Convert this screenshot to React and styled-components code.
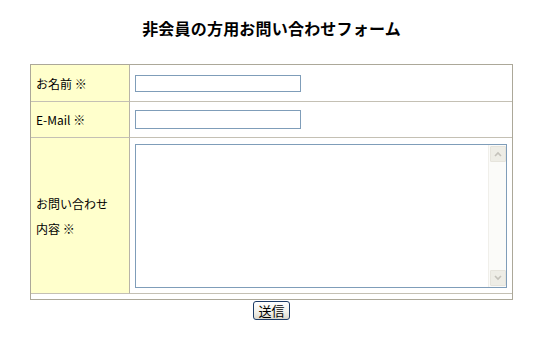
import React from 'react';
import styled, { createGlobalStyle } from 'styled-components';

const GlobalStyle = createGlobalStyle`
    html, body {
        margin: 0;
        padding: 0;
        background: #ffffff;
    }
    body {
        font-family: "Noto Sans CJK JP", "DejaVu Sans", sans-serif;
        color: #000000;
    }
`;

const Page = styled.div`
    width: 543px;
    display: flex;
    flex-direction: column;
    align-items: center;
`;

const Title = styled.h2`
    margin: 17px 0 24px;
    font-size: 16px;
    line-height: 23px;
    font-weight: bold;
    letter-spacing: 0.2px;
`;

const FormTable = styled.table`
    width: 483px;
    border: 1px solid #aca899;
    border-spacing: 0;
    padding-bottom: 5px;
    box-sizing: border-box;
`;

const Row = styled.tr``;

const LabelCell = styled.th`
    width: 99px;
    height: ${p => p.$h}px;
    box-sizing: border-box;
    padding: 0 0 0 5px;
    background: #ffffcc;
    border-right: 1px solid #b8b4a8;
    border-bottom: 1px solid #c4c0b4;
    text-align: left;
    font-weight: normal;
    font-size: 12px;
    line-height: 25px;
`;

const FieldCell = styled.td`
    height: ${p => p.$h}px;
    box-sizing: border-box;
    padding: 0 5px 0 5px;
    border-bottom: 1px solid #c4c0b4;
    vertical-align: middle;
`;

const TextInput = styled.input`
    display: block;
    width: 166px;
    height: ${p => p.$h}px;
    box-sizing: border-box;
    border: 1px solid #7f9db9;
    padding: 0 2px;
    font-size: 12px;
    font-family: inherit;
    outline: none;
`;

const AreaBox = styled.div`
    display: flex;
    width: 372px;
    height: 144px;
    box-sizing: border-box;
    border: 1px solid #7f9db9;
    background: #ffffff;
`;

const Area = styled.textarea`
    flex: 1;
    border: none;
    resize: none;
    outline: none;
    padding: 2px;
    font-size: 12px;
    font-family: inherit;
`;

const ScrollBar = styled.div`
    width: 17px;
    display: flex;
    flex-direction: column;
    justify-content: space-between;
    background: #fbfbf9;
    border-left: 1px solid #f0efea;
    padding: 1px 0;
`;

const ScrollButton = styled.div`
    width: 16px;
    height: 16px;
    margin-left: 1px;
    box-sizing: border-box;
    border: 1px solid #e6e4dc;
    border-radius: 1px;
    background: #eeede6;
    display: flex;
    align-items: center;
    justify-content: center;
`;

const Submit = styled.button`
    margin-top: 1px;
    width: 37px;
    height: 19px;
    padding: 0;
    border: 1px solid #1c3b66;
    border-radius: 3px;
    background: linear-gradient(#ffffff, #f2f1ea 60%, #dcd9cc);
    font-family: inherit;
    font-size: 13px;
    line-height: 15px;
    color: #000000;
`;

const Chevron = ({ up }) => (
    <svg width="8" height="6" viewBox="0 0 8 6">
        <path
            d={up ? 'M1 5 L4 2 L7 5' : 'M1 1 L4 4 L7 1'}
            fill="none"
            stroke="#c4c2ba"
            strokeWidth="1.6"
        />
    </svg>
);

const App = () => {
    return (
        <Page>
            <GlobalStyle />
            <Title>非会員の方用お問い合わせフォーム</Title>
            <FormTable>
                <tbody>
                    <Row>
                        <LabelCell $h={37}>お名前 ※</LabelCell>
                        <FieldCell $h={37}>
                            <TextInput $h={17} />
                        </FieldCell>
                    </Row>
                    <Row>
                        <LabelCell $h={36}>E-Mail ※</LabelCell>
                        <FieldCell $h={36}>
                            <TextInput $h={19} />
                        </FieldCell>
                    </Row>
                    <Row>
                        <LabelCell $h={156}>
                            お問い合わせ<br />内容 ※
                        </LabelCell>
                        <FieldCell $h={156}>
                            <AreaBox>
                                <Area />
                                <ScrollBar>
                                    <ScrollButton><Chevron up /></ScrollButton>
                                    <ScrollButton><Chevron /></ScrollButton>
                                </ScrollBar>
                            </AreaBox>
                        </FieldCell>
                    </Row>
                </tbody>
            </FormTable>
            <Submit>送信</Submit>
        </Page>
    );
};

export default App;
